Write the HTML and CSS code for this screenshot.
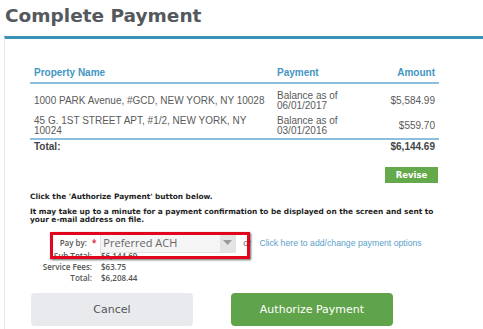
FILE: index.html
```html
<!DOCTYPE html>
<html>
<head>
<meta charset="utf-8">
<link rel="stylesheet" href="styles.css">
</head>
<body>
<h1 class="title">Complete Payment</h1>
<div class="panel">
  <table class="items">
    <thead>
      <tr>
        <th class="c-name">Property Name</th>
        <th class="c-pay">Payment</th>
        <th class="c-amt">Amount</th>
      </tr>
    </thead>
    <tbody>
      <tr class="first">
        <td>1000 PARK Avenue, #GCD, NEW YORK, NY 10028</td>
        <td>Balance as of<br>06/01/2017</td>
        <td class="c-amt">$5,584.99</td>
      </tr>
      <tr>
        <td>45 G. 1ST STREET APT, #1/2, NEW YORK, NY<br>10024</td>
        <td>Balance as of<br>03/01/2016</td>
        <td class="c-amt">$559.70</td>
      </tr>
      <tr class="total">
        <td>Total:</td>
        <td></td>
        <td class="c-amt">$6,144.69</td>
      </tr>
    </tbody>
  </table>
  <div class="revise-row"><button class="revise">Revise</button></div>
  <p class="note first-note">Click the 'Authorize Payment' button below.</p>
  <p class="note">It may take up to a minute for a payment confirmation to be displayed on the screen and sent to your e-mail address on file.</p>
  <div class="pay-row">
    <span class="pay-label">Pay by:</span><span class="req">*</span>
    <div class="select"><span class="sel-text">Preferred ACH</span><span class="sel-arrow"><svg width="9" height="5" viewBox="0 0 9 5"><path d="M0 0h9L4.5 5z" fill="#9a9a9a"/></svg></span></div>
    <span class="or">or</span>
    <a class="link">Click here to add/change payment options</a>
    <div class="highlight"></div>
  </div>
  <div class="summary">
    <span class="s-label">Sub Total:</span><span class="s-val">$6,144.69</span>
    <span class="s-label">Service Fees:</span><span class="s-val">$63.75</span>
    <span class="s-label">Total:</span><span class="s-val">$6,208.44</span>
  </div>
  <div class="actions">
    <button class="btn cancel">Cancel</button>
    <button class="btn authorize">Authorize Payment</button>
  </div>
</div>
</body>
</html>
```
FILE: styles.css
```css
html, body { margin: 0; padding: 0; background: #fff; }
body { width: 483px; height: 329px; overflow: hidden; font-family: "Liberation Sans", Arial, sans-serif; }

.title {
  margin: 0;
  padding: 5px 0 9px 5px;
  font-family: "DejaVu Sans", Verdana, sans-serif;
  font-weight: bold;
  font-size: 18.5px;
  line-height: 22px;
  color: #53595d;
}

.panel {
  margin-left: 4px;
  border-top: 3px solid #3a93b7;
  border-left: 1px solid #e6e6e6;
  padding-left: 25px;
  height: 300px;
}

.items {
  margin-top: 26px;
  width: 409px;
  border-collapse: collapse;
  font-size: 10px;
  color: #5a5a5a;
}
.items th {
  font-weight: bold;
  color: #4296c3;
  text-align: left;
  line-height: 12px;
  padding: 2px 4px 3px;
  border-bottom: 2px solid #8bbfdb;
}
.items td {
  line-height: 10px;
  padding: 3px 4px 2px;
  vertical-align: middle;
}
.items .first td { padding-top: 7px; }
.items .c-name { width: 235px; }
.items .c-amt { text-align: right; }
.items .total td {
  border-top: 2px solid #8bbfdb;
  font-weight: bold;
  color: #444;
  line-height: 12px;
  padding-top: 1px;
}

.revise-row {
  display: flex;
  justify-content: flex-end;
  width: 408px;
  margin-top: 12px;
}
.revise {
  width: 53px;
  height: 16px;
  border: 0;
  padding: 0;
  background: #64a94c;
  color: #fff;
  font-family: "DejaVu Sans", Verdana, sans-serif;
  font-weight: bold;
  font-size: 8.5px;
}

.note {
  margin: 0;
  width: 418px;
  font-family: "DejaVu Sans", Verdana, sans-serif;
  font-weight: bold;
  font-size: 7.4px;
  line-height: 8.6px;
  color: #1e1e1e;
}
.first-note { margin-top: 10px; margin-bottom: 6px; }

.pay-row {
  position: relative;
  display: flex;
  align-items: center;
  height: 20px;
  margin-top: 8px;
  font-family: "Open Sans", sans-serif;
}
.pay-label {
  width: 57px;
  text-align: right;
  font-weight: 600;
  font-size: 8px;
  color: #555;
}
.req {
  margin: 0 4px 0 5px;
  color: #d9304a;
  font-size: 8px;
  font-weight: bold;
}
.select {
  display: flex;
  align-items: stretch;
  width: 136px;
  height: 20px;
  background: #f5f5f5;
  border: 1px solid #e2e2e2;
  box-sizing: border-box;
}
.sel-text {
  flex: 1;
  padding-left: 2px;
  font-size: 11px;
  line-height: 18px;
  color: #666;
}
.sel-arrow {
  width: 15px;
  background: #e4e4e4;
  display: flex;
  align-items: center;
  justify-content: center;
}
.or {
  margin-left: 7px;
  font-family: "Liberation Sans", Arial, sans-serif;
  font-size: 9px;
  color: #666;
}
.link {
  margin-left: 8px;
  font-family: "Liberation Sans", Arial, sans-serif;
  font-size: 8.7px;
  color: #5a9fca;
}
.highlight {
  position: absolute;
  left: 20px;
  top: -1px;
  width: 200px;
  height: 27px;
  box-sizing: border-box;
  border: 3px solid #e1061d;
  box-shadow: 1px 1px 2px rgba(0,0,0,0.6);
  pointer-events: none;
}

.summary {
  display: grid;
  grid-template-columns: 62px auto;
  column-gap: 9px;
  margin-top: -3px;
  font-family: "Open Sans", sans-serif;
  font-weight: 600;
  font-size: 8px;
  line-height: 11px;
  color: #555;
}
.s-label { text-align: right; }

.actions {
  display: flex;
  gap: 38px;
  margin-top: 10px;
  margin-left: 1px;
}
.btn {
  width: 162px;
  height: 33px;
  border: 0;
  border-radius: 4px;
  font-family: "DejaVu Sans", Verdana, sans-serif;
  font-size: 11px;
  padding: 0;
}
.cancel { background: #e8eaed; color: #555; }
.authorize { background: #5fa34a; color: #fff; }
```
